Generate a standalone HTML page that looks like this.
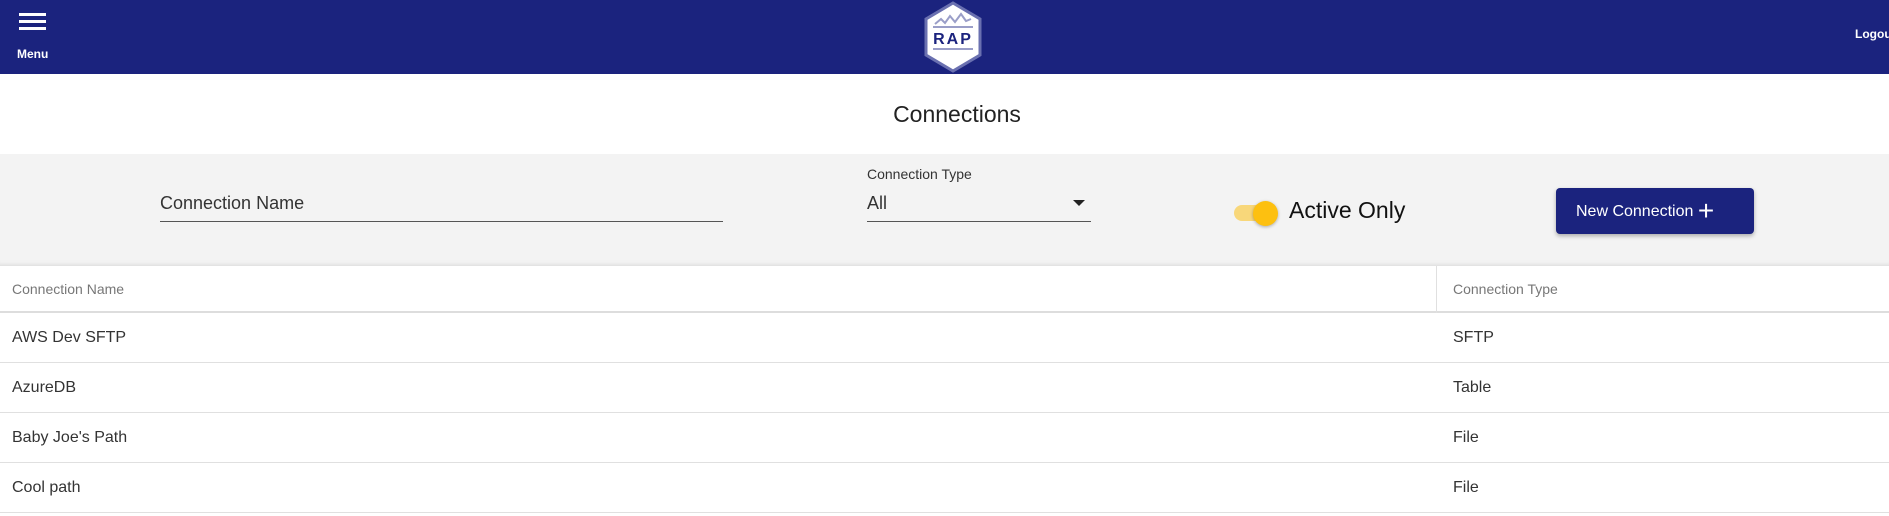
<!DOCTYPE html>
<html><head><meta charset="utf-8">
<style>
*{margin:0;padding:0;box-sizing:border-box}
body{width:1889px;height:516px;overflow:hidden;background:#fff;font-family:"Liberation Sans",sans-serif;color:#222;position:relative}
.abs{position:absolute}
.hdr{left:0;top:0;width:1889px;height:74px;background:#1b237e}
.bar{position:absolute;left:19px;width:27px;height:3px;background:#fff}
.filter{left:0;top:154px;width:1889px;height:112px;background:#f3f3f3;box-shadow:inset 0 -6px 6px -6px rgba(0,0,0,.15)}
.row{position:absolute;left:0;width:1889px;border-bottom:1px solid #e0e0e0;font-size:16px;color:#333}
.row span{position:absolute;top:50%;transform:translateY(-50%)}
</style></head><body>
<div class="abs hdr">
  <div class="bar" style="top:13px"></div>
  <div class="bar" style="top:20px"></div>
  <div class="bar" style="top:27px"></div>
  <div class="abs" style="left:17px;top:47px;color:#fff;font-size:12px;font-weight:bold">Menu</div>
  <svg class="abs" style="left:923px;top:1px" width="60" height="72" viewBox="0 0 60 72">
    <polygon points="30,2 57,18 57,54 30,70 3,54 3,18" fill="#fff" stroke="#6a70b0" stroke-width="3"/>
    <polyline points="12,23 18,18 22,22 27,15 32,21 38,13 43,20 48,18" fill="none" stroke="#9a9ec8" stroke-width="2"/>
    <rect x="10" y="25" width="40" height="2" fill="#9a9ec8"/>
    <text x="30" y="43" text-anchor="middle" font-family="Liberation Sans" font-weight="bold" font-size="16" fill="#1b237e" letter-spacing="2">RAP</text>
    <rect x="10" y="47" width="40" height="2" fill="#9a9ec8"/>
  </svg>
  <div class="abs" style="left:1855px;top:27px;color:#fff;font-size:12px;font-weight:bold;white-space:nowrap">Logout</div>
</div>
<div class="abs" style="left:0;width:1914px;top:101px;text-align:center;font-size:23px;color:#222">Connections</div>
<div class="abs filter">
  <div class="abs" style="left:160px;top:39px;font-size:18px;color:#333">Connection Name</div>
  <div class="abs" style="left:160px;top:67px;width:563px;height:1px;background:#555"></div>
  <div class="abs" style="left:867px;top:12px;font-size:14px;color:#333">Connection Type</div>
  <div class="abs" style="left:867px;top:39px;font-size:18px;color:#333">All</div>
  <div class="abs" style="left:1073px;top:46px;width:0;height:0;border-left:6px solid transparent;border-right:6px solid transparent;border-top:6px solid #222"></div>
  <div class="abs" style="left:867px;top:67px;width:224px;height:1px;background:#555"></div>
  <div class="abs" style="left:1234px;top:51px;width:38px;height:16px;border-radius:8px;background:#f8d77a"></div>
  <div class="abs" style="left:1253px;top:47px;width:25px;height:25px;border-radius:50%;background:#fdc010;box-shadow:0 1px 3px rgba(0,0,0,.3)"></div>
  <div class="abs" style="left:1289px;top:43px;font-size:23px;color:#111">Active Only</div>
  <div class="abs" style="left:1556px;top:34px;width:198px;height:46px;background:#1b237e;border-radius:4px;box-shadow:0 2px 4px rgba(0,0,0,.3);color:#fff;font-size:16px;line-height:46px;padding-left:20px">New Connection <span style="font-size:28px;vertical-align:-4px;font-weight:300">+</span></div>
</div>
<div class="row" style="top:266px;height:47px;border-bottom:2px solid #ddd;font-size:14px;color:#777"><span style="left:12px">Connection Name</span><span style="left:1453px">Connection Type</span></div>
<div class="abs" style="left:1436px;top:266px;width:1px;height:47px;background:#e0e0e0"></div>
<div class="row" style="top:313px;height:50px"><span style="left:12px">AWS Dev SFTP</span><span style="left:1453px">SFTP</span></div>
<div class="row" style="top:363px;height:50px"><span style="left:12px">AzureDB</span><span style="left:1453px">Table</span></div>
<div class="row" style="top:413px;height:50px"><span style="left:12px">Baby Joe's Path</span><span style="left:1453px">File</span></div>
<div class="row" style="top:463px;height:50px"><span style="left:12px">Cool path</span><span style="left:1453px">File</span></div>
</body></html>
